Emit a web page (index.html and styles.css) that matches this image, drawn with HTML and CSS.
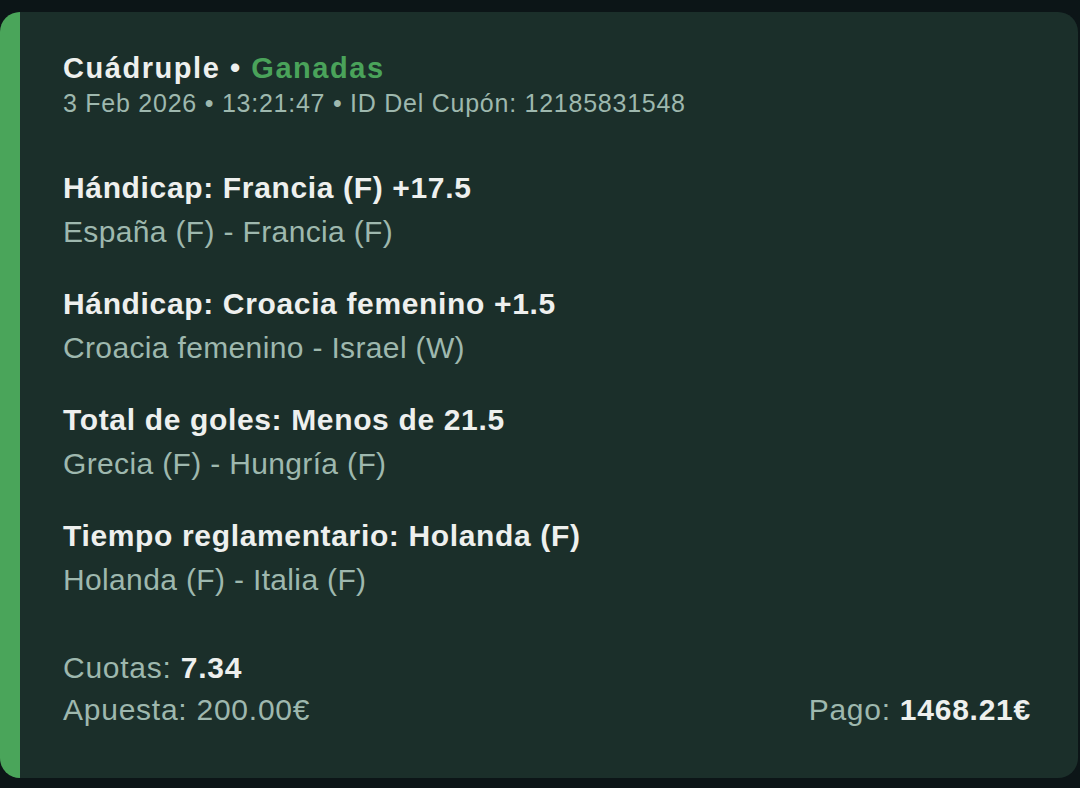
FILE: index.html
```html
<!DOCTYPE html>
<html lang="es">
<head>
    <meta charset="utf-8">
    <title>Cupón - Cuádruple</title>
    <meta name="viewport" content="width=device-width, initial-scale=1.0">
    <link rel="stylesheet" href="styles.css">
</head>
<body>
    <div class="ticket">
        <div class="ticket-header">
            <p class="ticket-title">Cuádruple • <span class="status-won">Ganadas</span></p>
            <p class="ticket-meta">3 Feb 2026 • 13:21:47 • ID Del Cupón: 12185831548</p>
        </div>

        <div class="selections">
            <div class="selection">
                <p class="market">Hándicap: Francia (F) +17.5</p>
                <p class="event">España (F) - Francia (F)</p>
            </div>
            <div class="selection">
                <p class="market">Hándicap: Croacia femenino +1.5</p>
                <p class="event">Croacia femenino - Israel (W)</p>
            </div>
            <div class="selection">
                <p class="market">Total de goles: Menos de 21.5</p>
                <p class="event">Grecia (F) - Hungría (F)</p>
            </div>
            <div class="selection">
                <p class="market">Tiempo reglamentario: Holanda (F)</p>
                <p class="event">Holanda (F) - Italia (F)</p>
            </div>
        </div>

        <div class="summary">
            <p class="summary-line">Cuotas: <strong>7.34</strong></p>
            <div class="summary-row">
                <p class="summary-line">Apuesta: 200.00€</p>
                <p class="summary-line">Pago: <strong>1468.21€</strong></p>
            </div>
        </div>
    </div>
</body>
</html>
```

FILE: styles.css
```css
body {
    font-family: "Liberation Sans", Arial, sans-serif;
    background-color: #0c1517;
    margin: 0;
    padding: 12px 2px 10px 0;
}
p {
    margin: 0;
}
.ticket {
    background-color: #1b2f2a;
    border-left: 20px solid #4aa55a;
    border-radius: 20px;
    height: 766px;
    box-sizing: border-box;
    padding: 39px 47px 0 43px;
}
.ticket-title {
    font-size: 29px;
    line-height: 34px;
    font-weight: bold;
    letter-spacing: 1.55px;
    color: #eef0ee;
}
.status-won {
    color: #4aa35a;
}
.ticket-meta {
    font-size: 25px;
    line-height: 30px;
    letter-spacing: 0.75px;
    margin-top: 3px;
    color: #9eb8ae;
}
.selections {
    display: flex;
    flex-direction: column;
    gap: 28px;
    margin-top: 48px;
}
.market {
    font-size: 30px;
    line-height: 44px;
    font-weight: bold;
    letter-spacing: 0.65px;
    color: #eef0ee;
}
.event {
    font-size: 30px;
    line-height: 44px;
    letter-spacing: 0.35px;
    color: #9eb8ae;
}
.summary {
    margin-top: 45px;
}
.summary-line {
    font-size: 30px;
    line-height: 42px;
    letter-spacing: 0.75px;
    color: #9eb8ae;
}
.summary-line strong {
    color: #eef0ee;
}
.summary-row {
    display: flex;
    justify-content: space-between;
}
```
